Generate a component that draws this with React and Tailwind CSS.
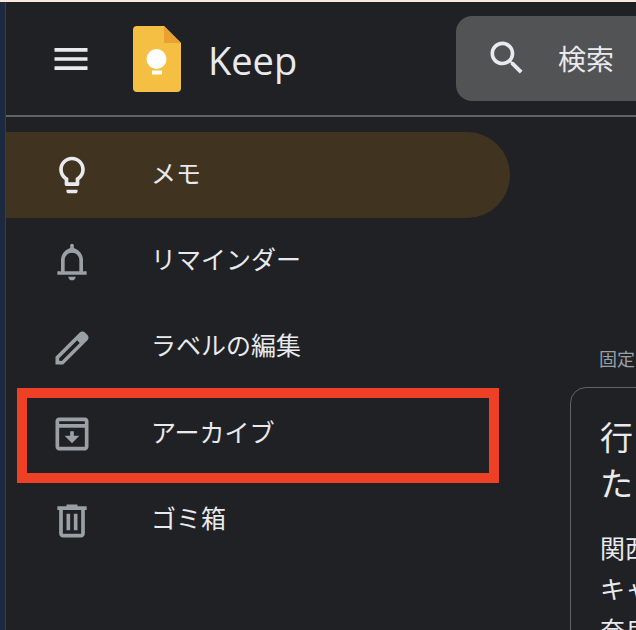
const font = { fontFamily: '"Noto Sans CJK JP", "Noto Sans", sans-serif' };

const Icon = ({ d, className = "text-[#9aa0a6]" }) => (
  <svg viewBox="0 0 24 24" className={`w-[44px] h-[44px] shrink-0 fill-current ${className}`}>
    <path d={d} />
  </svg>
);

const navItems = [
  {
    label: "メモ",
    active: true,
    d: "M9 21c0 .55.45 1 1 1h4c.55 0 1-.45 1-1v-1H9v1zm3-19C8.14 2 5 5.14 5 9c0 2.38 1.19 4.47 3 5.74V17c0 .55.45 1 1 1h6c.55 0 1-.45 1-1v-2.26c1.81-1.27 3-3.36 3-5.74 0-3.86-3.14-7-7-7zm2.85 11.1l-.85.6V16h-4v-2.3l-.85-.6C7.8 12.16 7 10.63 7 9c0-2.76 2.24-5 5-5s5 2.24 5 5c0 1.63-.8 3.16-2.15 4.1z",
  },
  {
    label: "リマインダー",
    d: "M18 17v-6c0-3.19-2.2-5.87-5-6.65V3c0-.55-.45-1-1-1s-1 .45-1 1v1.35C8.2 5.13 6 7.81 6 11v6H4v2h16v-2h-2zm-2 0H8v-6c0-2.21 1.79-4 4-4s4 1.79 4 4v6zm-4 5c1.1 0 2-.9 2-2h-4c0 1.1.9 2 2 2z",
  },
  {
    label: "ラベルの編集",
    d: "M20.41 4.94l-1.35-1.35c-.78-.78-2.05-.78-2.83 0L3 16.82V21h4.18L20.41 7.77c.79-.78.79-2.05 0-2.83zm-14 14.12L5 19v-1.36l9.82-9.82 1.41 1.41-9.82 9.83z",
  },
  {
    label: "アーカイブ",
    d: "M19 3H5c-1.1 0-2 .9-2 2v14c0 1.1.9 2 2 2h14c1.1 0 2-.9 2-2V5c0-1.1-.9-2-2-2zm0 2v1.6H5V5h14zM5 19V8.6h14V19H5zm7-2l4-4h-3v-2.5h-2V13H8l4 4z",
  },
  {
    label: "ゴミ箱",
    d: "M15 4V3H9v1H4v2h1v13c0 1.1.9 2 2 2h10c1.1 0 2-.9 2-2V6h1V4h-5zm2 15H7V6h10v13zM9 8h2v9H9zm4 0h2v9h-2z",
  },
];

const KeepLogo = () => (
  <svg viewBox="0 0 48 66" className="w-[48px] h-[66px] shrink-0">
    <path d="M4 0h27l17 17v45a4 4 0 0 1-4 4H4a4 4 0 0 1-4-4V4a4 4 0 0 1 4-4z" fill="#f4bf42" />
    <path d="M31 0l17 17H31z" fill="#e9a232" />
    <circle cx="23.5" cy="33" r="10" fill="#fff" />
    <rect x="19" y="44.5" width="10" height="4" fill="#fff" />
  </svg>
);

export default function App() {
  return (
    <div className="relative w-[636px] h-[630px] overflow-hidden bg-[#202124] text-[#e8eaed]" style={font}>
      <div className="h-[2px] bg-[#f7e7dc]" />
      <div className="flex h-[628px]">
        <div className="w-[6px] shrink-0 bg-[#1b2a40] border-r border-[#3a3d42]" />
        <div className="flex-1 min-w-0">
          {/* Header */}
          <header className="flex items-center h-[115px] border-b-2 border-[#5f6368]">
            <div className="flex items-center w-[450px] shrink-0">
              <Icon
                className="ml-[43px] text-[#e8eaed]"
                d="M3 18h18v-2H3v2zm0-5h18v-2H3v2zm0-7v2h18V6H3z"
              />
              <div className="ml-[40px]">
                <KeepLogo />
              </div>
              <span className="ml-[27px] mt-[3px] text-[38px] leading-none" style={{ fontFamily: '"Open Sans", sans-serif' }}>
                Keep
              </span>
            </div>
            <div className="flex items-center flex-1 h-[85px] -mt-[1px] rounded-l-[16px] bg-[#525355] pl-[29px]">
              <Icon
                className="text-[#e8eaed]"
                d="M15.5 14h-.79l-.28-.27C15.41 12.59 16 11.11 16 9.5 16 5.91 13.09 3 9.5 3S3 5.91 3 9.5 5.91 16 9.5 16c1.61 0 3.09-.59 4.23-1.57l.27.28v.79l5 4.99L20.49 19l-4.99-5zm-6 0C7.01 14 5 11.99 5 9.5S7.01 5 9.5 5 14 7.01 14 9.5 11.99 14 9.5 14z"
              />
              <span className="ml-[29px] text-[28px] leading-none">検索</span>
            </div>
          </header>

          <div className="flex">
            {/* Sidebar */}
            <nav className="w-[504px] shrink-0 pt-[15px]">
              {navItems.map((item) => (
                <div
                  key={item.label}
                  className={`flex items-center h-[86.4px] pl-[44px] rounded-r-full ${item.active ? "bg-[#403420]" : ""}`}
                >
                  <Icon d={item.d} className={item.active ? "text-[#e8eaed]" : "text-[#9aa0a6]"} />
                  <span className="ml-[57px] pb-[6px] text-[25px] leading-none whitespace-nowrap">{item.label}</span>
                </div>
              ))}
            </nav>

            {/* Notes */}
            <main className="flex-1 min-w-0 pl-[60px] pt-[229px]">
              <div className="pl-[29px] h-[41px] text-[18px] leading-[24px] text-[#9aa0a6] whitespace-nowrap">固定</div>
              <div className="w-[300px] h-[300px] pl-[29px] pt-[25px] border-[1.5px] border-[#5f6368] rounded-[16px]">
                <div className="text-[33px] leading-[46px] font-normal">
                  <div>行</div>
                  <div>た</div>
                </div>
                <div className="mt-[22px] text-[25px] leading-[41px]">
                  <div>関西</div>
                  <div>キャ</div>
                  <div>奈良</div>
                </div>
              </div>
            </main>
          </div>
        </div>
      </div>

      {/* Red annotation box */}
      <div className="absolute left-[17px] top-[388px] w-[482px] h-[95px] border-[10px] border-[#ee4024]" />
    </div>
  );
}
